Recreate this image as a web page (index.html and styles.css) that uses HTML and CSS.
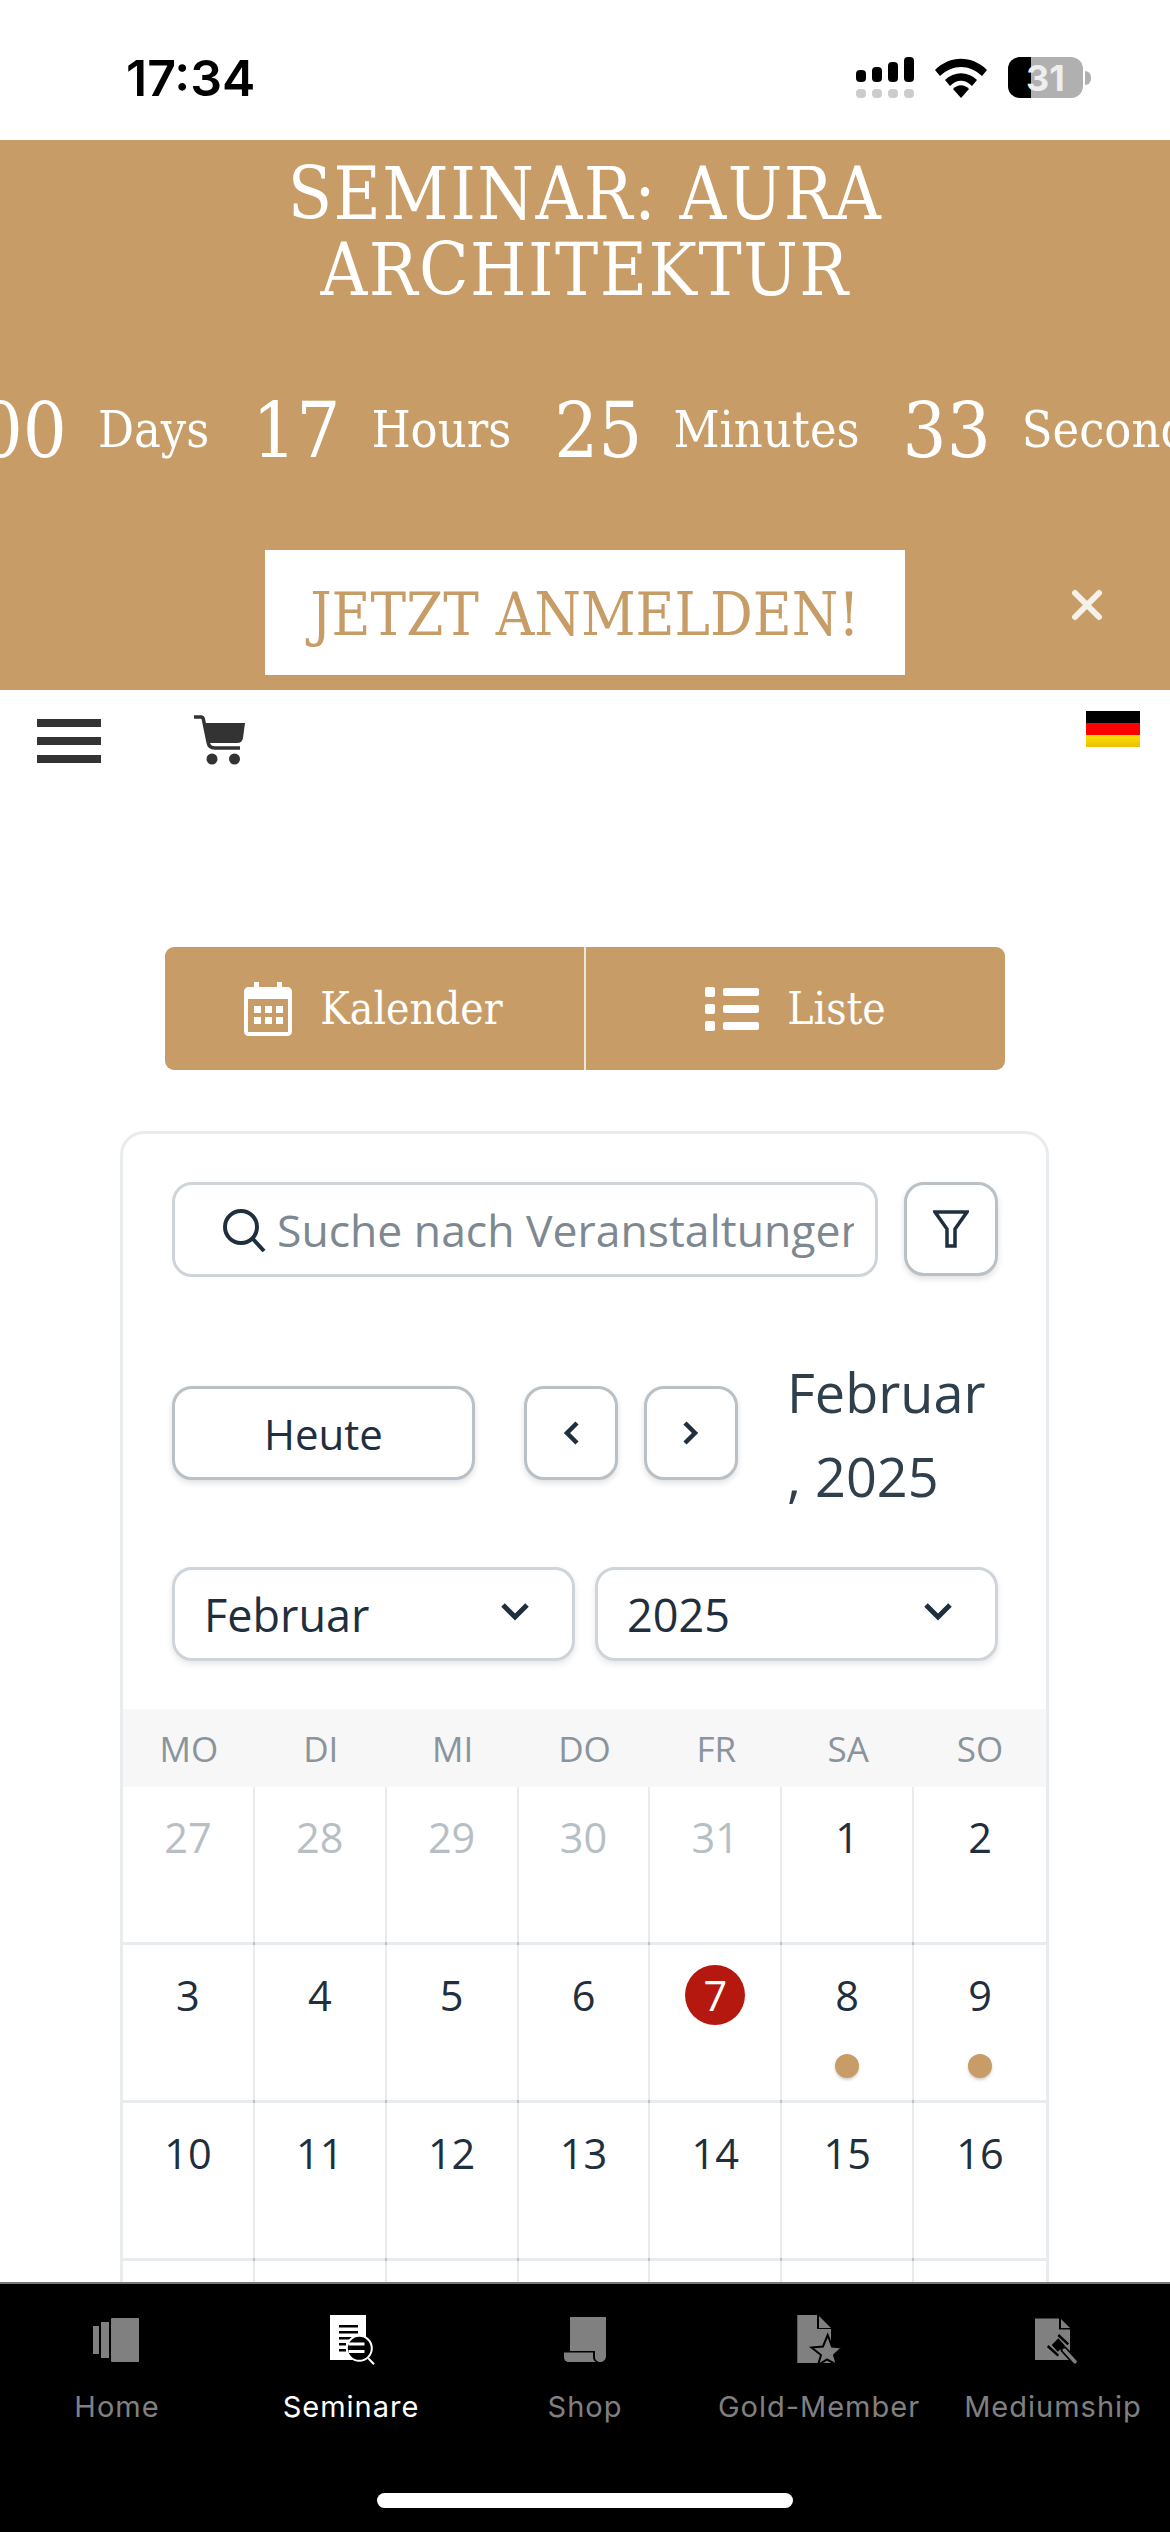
FILE: index.html
```html
<!DOCTYPE html>
<html lang="de">
<head>
    <meta charset="UTF-8">
    <meta name="viewport" content="width=device-width, initial-scale=1.0">
    <title>Seminare</title>
    <link rel="stylesheet" href="styles.css">
</head>
<body>
    <div class="phone">
        <!-- iOS status bar -->
        <div class="status-bar">
            <span class="clock">17:34</span>
            <div class="status-icons">
                <svg class="signal" width="58" height="41" viewBox="0 0 58 41">
                    <rect x="0" y="13" width="10" height="12" rx="4"/>
                    <rect x="16" y="10" width="10" height="15" rx="4"/>
                    <rect x="32" y="5" width="10" height="20" rx="4"/>
                    <rect x="48" y="0" width="10" height="25" rx="4"/>
                    <g fill="#ccc">
                        <rect x="0" y="32" width="10" height="9" rx="4"/>
                        <rect x="16" y="32" width="10" height="9" rx="4"/>
                        <rect x="32" y="32" width="10" height="9" rx="4"/>
                        <rect x="48" y="32" width="10" height="9" rx="4"/>
                    </g>
                </svg>
                <svg class="wifi" width="52" height="40" viewBox="0 0 52 40">
                    <path d="M0 12 C15 -3 37 -3 52 12 L47 18 C34 6 18 6 5 18 Z"/>
                    <path d="M10 22 C19 13 33 13 42 22 L37 28 C30 21 22 21 15 28 Z"/>
                    <path d="M18 31 C23 26 29 26 34 31 L26 40 Z"/>
                </svg>
                <div class="battery">
                    <div class="battery-body"><div class="battery-fill"></div><span class="battery-level">31</span></div>
                    <div class="battery-tip"></div>
                </div>
            </div>
        </div>

        <main class="content">
            <!-- seminar countdown banner -->
            <section class="banner">
                <h1 class="banner-title">SEMINAR: AURA<br>ARCHITEKTUR</h1>
                <div class="countdown">
                    <span class="count-num">00</span><span class="count-label">Days</span>
                    <span class="count-num">17</span><span class="count-label">Hours</span>
                    <span class="count-num">25</span><span class="count-label">Minutes</span>
                    <span class="count-num">33</span><span class="count-label">Seconds</span>
                </div>
                <a class="banner-button">JETZT ANMELDEN!</a>
                <svg class="banner-close" width="32" height="32" viewBox="0 0 32 32"><path d="M4 4 L28 28 M28 4 L4 28"/></svg>
            </section>

            <div class="toolbar">
                <div class="hamburger"><span></span><span></span><span></span></div>
                <svg class="cart" width="52" height="50" viewBox="0 0 52 50">
                    <path class="cart-line" d="M1 2 H8 C9.500 2 10 3 10.300 4 L15 27 C15.600 31 18 33 22 33 H47"/>
                    <path d="M11 8 H52 L50 23 C49.500 26 47.500 28 44 28 H15.500 Z"/>
                    <circle cx="19" cy="44" r="5.500"/>
                    <circle cx="41.500" cy="44" r="5.500"/>
                </svg>
                <div class="flag"><span class="flag-black"></span><span class="flag-red"></span><span class="flag-gold"></span></div>
            </div>

            <div class="view-toggle">
                <a class="toggle-item">
                    <svg class="toggle-cal" width="48" height="54" viewBox="0 0 48 54">
                        <path fill-rule="evenodd" d="M10 0 H15 V5 H33 V0 H38 V5 H43 C46 5 48 7 48 10 V49 C48 52 46 54 43 54 H5 C2 54 0 52 0 49 V10 C0 7 2 5 5 5 H10 Z M4 17 V49 C4 50 4 50 5 50 H43 C44 50 44 50 44 49 V17 Z"/>
                        <rect x="10" y="24" width="7" height="7"/><rect x="21" y="24" width="7" height="7"/><rect x="32" y="24" width="7" height="7"/>
                        <rect x="10" y="35" width="7" height="7"/><rect x="21" y="35" width="7" height="7"/><rect x="32" y="35" width="7" height="7"/>
                    </svg>
                    <span>Kalender</span>
                </a>
                <a class="toggle-item">
                    <svg width="54" height="44" viewBox="0 0 54 44">
                        <rect x="0" y="0" width="10" height="10" rx="2"/><rect x="18" y="1" width="36" height="8" rx="2"/>
                        <rect x="0" y="17" width="10" height="10" rx="2"/><rect x="18" y="18" width="36" height="8" rx="2"/>
                        <rect x="0" y="34" width="10" height="10" rx="2"/><rect x="18" y="35" width="36" height="8" rx="2"/>
                    </svg>
                    <span>Liste</span>
                </a>
            </div>

            <!-- calendar card -->
            <section class="card">
                <div class="card-controls">
                    <div class="search-row">
                        <div class="search-box">
                            <svg class="search-icon" width="44" height="44" viewBox="0 0 44 44"><circle cx="19" cy="19" r="16"/><path d="M31 31 L42 43"/></svg>
                            <div class="search-text">Suche nach Veranstaltungen</div>
                        </div>
                        <button class="icon-btn filter-btn">
                            <svg width="36" height="38" viewBox="0 0 36 38"><path d="M2 2 H34 L22 19 V36 H14 V19 Z"/></svg>
                        </button>
                    </div>

                    <div class="nav-row">
                        <button class="today-btn">Heute</button>
                        <button class="icon-btn nav-btn">
                            <svg width="18" height="26" viewBox="0 0 18 26"><path d="M15 3 L5 13 L15 23"/></svg>
                        </button>
                        <button class="icon-btn nav-btn">
                            <svg width="18" height="26" viewBox="0 0 18 26"><path d="M3 3 L13 13 L3 23"/></svg>
                        </button>
                        <div class="month-title">Februar<br>, 2025</div>
                    </div>

                    <div class="select-row">
                        <div class="select-box"><span>Februar</span><svg width="30" height="20" viewBox="0 0 30 20"><path d="M3 3 L15 15 L27 3"/></svg></div>
                        <div class="select-box"><span>2025</span><svg width="30" height="20" viewBox="0 0 30 20"><path d="M3 3 L15 15 L27 3"/></svg></div>
                    </div>
                </div>

                <div class="weekdays">
                    <div>MO</div><div>DI</div><div>MI</div><div>DO</div><div>FR</div><div>SA</div><div>SO</div>
                </div>

                <div class="days">
                    <div class="day muted"><span>27</span></div>
                    <div class="day muted"><span>28</span></div>
                    <div class="day muted"><span>29</span></div>
                    <div class="day muted"><span>30</span></div>
                    <div class="day muted"><span>31</span></div>
                    <div class="day"><span>1</span></div>
                    <div class="day"><span>2</span></div>
                    <div class="day"><span>3</span></div>
                    <div class="day"><span>4</span></div>
                    <div class="day"><span>5</span></div>
                    <div class="day"><span>6</span></div>
                    <div class="day today"><span>7</span></div>
                    <div class="day"><span>8</span><i class="dot"></i></div>
                    <div class="day"><span>9</span><i class="dot"></i></div>
                    <div class="day"><span>10</span></div>
                    <div class="day"><span>11</span></div>
                    <div class="day"><span>12</span></div>
                    <div class="day"><span>13</span></div>
                    <div class="day"><span>14</span></div>
                    <div class="day"><span>15</span></div>
                    <div class="day"><span>16</span></div>
                </div>
                <div class="days days-next">
                    <div class="day"></div>
                    <div class="day"></div>
                    <div class="day"></div>
                    <div class="day"></div>
                    <div class="day"></div>
                    <div class="day"></div>
                    <div class="day"></div>
                </div>
            </section>
        </main>

        <!-- bottom tabs -->
        <nav class="tabbar">
            <div class="tabs">
                <a class="tab">
                    <svg viewBox="0 0 46 50">
                        <rect x="-1" y="11" width="6" height="28"/><rect x="7" y="7" width="8" height="36"/><rect x="17" y="3" width="28" height="44" rx="1"/>
                    </svg>
                    <span>Home</span>
                </a>
                <a class="tab active">
                    <svg viewBox="0 0 46 50">
                        <rect x="2" y="0" width="36" height="45"/>
                        <g class="ink">
                            <rect x="11" y="10" width="19" height="2.500"/>
                            <rect x="11" y="16" width="19" height="2.500"/>
                            <rect x="11" y="22" width="14" height="2.500"/>
                            <rect x="11" y="28" width="7" height="2.500"/>
                            <rect x="11" y="34" width="7" height="2.500"/>
                        </g>
                        <circle class="lens" cx="31.300" cy="33.300" r="12.500"/>
                        <rect x="20.500" y="27.500" width="16" height="3"/>
                        <rect x="20.500" y="35" width="16" height="3"/>
                        <path class="handle" d="M40.300 43.300 L46 49.300"/>
                    </svg>
                    <span>Seminare</span>
                </a>
                <a class="tab">
                    <svg viewBox="0 0 46 50">
                        <path d="M8 2 H44 V41 C44 45 41 47 38 47 C35 47 33 44.500 33 42 V36 H8 Z"/>
                        <path d="M2 37.500 H31 V42 C31 44 32 46 34 47 H7 C4 47 2 45 2 42 Z"/>
                    </svg>
                    <span>Shop</span>
                </a>
                <a class="tab">
                    <svg viewBox="0 0 46 50">
                        <path d="M1.300 0 H21 V14 H35 V48 H1.300 Z"/>
                        <path d="M23 1 L35 13 H23 Z"/>
                        <path class="star" d="M31.700 20 L36 31.500 L46.300 32.500 L38 40 L41 50 L31 44.500 L22 50 L25 40 L15.500 32.500 L27 31.500 Z"/>
                    </svg>
                    <span>Gold-Member</span>
                </a>
                <a class="tab">
                    <svg viewBox="0 0 46 50">
                        <path d="M5 3.500 H29 V14.500 H40 V45 H5 Z"/>
                        <path d="M31 4 L40 13 H31 Z"/>
                        <path class="gavel-bar" d="M28.300 20 L38.300 29.300 M17.700 31 L28.300 40.700"/>
                        <path class="gavel-head" d="M28.300 23.300 L35 30.700 L27.700 36.700 L21.700 30 Z"/>
                        <path class="gavel-handle-out" d="M34.300 35 L45 46.700"/>
                        <path class="gavel-handle" d="M34.300 35 L45 46.700"/>
                    </svg>
                    <span>Mediumship</span>
                </a>
            </div>
            <div class="home-indicator"></div>
        </nav>
    </div>
</body>
</html>
```

FILE: styles.css
```css
/* Base styles */
* {
    margin: 0;
    padding: 0;
    box-sizing: border-box;
}

body {
    font-family: 'Open Sans', sans-serif;
    background-color: #fff;
}

.phone {
    width: 1170px;
    height: 2532px;
    display: flex;
    flex-direction: column;
    overflow: hidden;
}

/* Status bar */
.status-bar {
    height: 140px;
    flex: none;
    display: flex;
    align-items: flex-start;
    justify-content: space-between;
    padding: 50px 79px 0 126px;
}

.clock {
    font-family: 'Inter', sans-serif;
    font-size: 50px;
    font-weight: 600;
    line-height: 56px;
    color: #000;
}

.status-icons {
    display: flex;
    align-items: flex-start;
    padding-top: 7px;
}

.wifi {
    margin: 1px 21px 0 21px;
}

.battery {
    display: flex;
    align-items: center;
}

.battery-body {
    width: 75px;
    height: 41px;
    border-radius: 12px;
    background: #b0b0b0;
    position: relative;
    overflow: hidden;
    display: flex;
    align-items: center;
    justify-content: center;
}

.battery-fill {
    position: absolute;
    left: 0;
    top: 0;
    bottom: 0;
    width: 23px;
    background: #000;
}

.battery-level {
    position: relative;
    font-family: 'Inter', sans-serif;
    font-size: 36px;
    font-weight: 700;
    color: #eee;
}

.battery-tip {
    width: 6px;
    height: 14px;
    margin-left: 2px;
    border-radius: 0 7px 7px 0;
    background: #b0b0b0;
}

/* Everything between status bar and tabs */
.content {
    flex: 1;
    min-height: 0;
    overflow: hidden;
}

/* Banner */
.banner {
    position: relative;
    height: 550px;
    background-color: #c79c66;
    color: #fff;
    text-align: center;
    padding-top: 16px;
    font-family: 'DejaVu Serif Condensed', 'DejaVu Serif', serif;
}

.banner-title {
    font-size: 72px;
    font-weight: 400;
    letter-spacing: 1.500px;
    line-height: 76px;
}

.countdown {
    height: 108px;
    margin-top: 68px;
    padding-left: 64px;
    display: flex;
    align-items: center;
    justify-content: center;
    white-space: nowrap;
}

.count-num {
    font-size: 77px;
    margin-right: 31px;
}

.count-label {
    font-size: 50px;
    margin-right: 43px;
}

.banner-button {
    display: block;
    width: 640px;
    height: 125px;
    margin: 66px 0 0 265px;
    background: #fff;
    color: #c79c66;
    font-size: 59.300px;
    line-height: 130px;
    overflow: hidden;
}

.banner-close {
    position: absolute;
    right: 67px;
    top: 449px;
    fill: none;
    stroke: #f5f0e8;
    stroke-width: 6px;
    stroke-linecap: round;
}

/* Toolbar below banner */
.toolbar {
    height: 257px;
    display: flex;
    align-items: flex-start;
    padding: 25px 30px 0 37px;
}

.hamburger {
    width: 64px;
    margin-top: 4px;
    display: flex;
    flex-direction: column;
    gap: 10px;
}

.hamburger span {
    height: 8px;
    background: #333;
}

.cart {
    margin-left: 92px;
    fill: #333;
}

.cart-line {
    fill: none;
    stroke: #333;
    stroke-width: 3.500px;
}

.flag {
    width: 54px;
    margin: -4px 0 0 auto;
    display: flex;
    flex-direction: column;
}

.flag span {
    height: 12px;
}

.flag-black { background: #000; }
.flag-red { background: #f00; }
.flag-gold { background: linear-gradient(#ffe000, #e8c000); }

/* Kalender / Liste switch */
.view-toggle {
    width: 840px;
    height: 123px;
    margin: 0 auto;
    display: flex;
    border-radius: 9px;
    overflow: hidden;
    background: #c79c66;
}

.toggle-item {
    flex: 1;
    display: flex;
    align-items: center;
    justify-content: center;
    gap: 28px;
    color: #fff;
    font-family: 'DejaVu Serif Condensed', 'DejaVu Serif', serif;
    font-size: 44px;
    fill: #fff;
}

.toggle-item + .toggle-item {
    border-left: 2px solid #efe6da;
}

.toggle-cal {
    margin-left: -2px;
}

/* Calendar card */
.card {
    width: 929px;
    margin: 61px 0 0 120px;
    border: 3px solid #e9ecef;
    border-radius: 24px;
    background: #fff;
}

.card-controls {
    padding: 48px 48px 48px 49px;
}

.search-row,
.nav-row,
.select-row {
    display: flex;
}

.search-box {
    width: 706px;
    height: 95px;
    display: flex;
    align-items: center;
    padding-left: 47px;
    border: 3px solid #ced4da;
    border-radius: 20px;
}

.search-icon {
    flex: none;
    fill: none;
    stroke: #1f2f3d;
    stroke-width: 4px;
}

.search-text {
    width: 577px;
    margin-left: 11px;
    overflow: hidden;
    white-space: nowrap;
    font-size: 44.500px;
    color: #7d8890;
}

.icon-btn {
    height: 94px;
    width: 94px;
    display: flex;
    align-items: center;
    justify-content: center;
    background: #fff;
    border: 3px solid #b9c0c6;
    border-radius: 20px;
    box-shadow: 0 3px 6px rgba(0, 0, 0, 0.12);
    fill: none;
    stroke: #1f2f3d;
}

.filter-btn {
    margin-left: 26px;
}

.filter-btn svg {
    stroke-width: 3.500px;
}

.nav-row {
    margin-top: 84px;
    height: 179px;
    align-items: flex-start;
}

.today-btn {
    width: 303px;
    height: 94px;
    margin-top: 25px;
    background: #fff;
    border: 3px solid #b9c0c6;
    border-radius: 20px;
    box-shadow: 0 3px 6px rgba(0, 0, 0, 0.12);
    font-family: 'Open Sans', sans-serif;
    font-size: 42px;
    color: #1f2f3d;
}

.nav-btn {
    margin: 25px 0 0 49px;
    stroke-width: 4.500px;
}

.nav-btn + .nav-btn {
    margin-left: 26px;
}

.month-title {
    margin: -11px 0 0 49px;
    font-size: 54px;
    line-height: 84px;
    color: #2f3f4c;
}

.select-row {
    margin-top: 27px;
    gap: 20px;
}

.select-box {
    flex: 1;
    height: 94px;
    display: flex;
    align-items: center;
    justify-content: space-between;
    padding: 0 42px 0 29px;
    border: 3px solid #ced4da;
    border-radius: 20px;
    box-shadow: 0 3px 6px rgba(0, 0, 0, 0.1);
    font-size: 45px;
    color: #1f2f3d;
}

.select-box svg {
    fill: none;
    stroke: #1f2f3d;
    stroke-width: 5px;
    margin-top: -4px;
}

/* Month grid */
.weekdays,
.days {
    display: grid;
    grid-template-columns: repeat(7, 1fr);
    text-align: center;
}

.weekdays {
    height: 78px;
    align-items: center;
    background: #f7f7f7;
    font-size: 35px;
    color: #8a949c;
}

.day {
    position: relative;
    height: 158px;
    padding-top: 22px;
    display: flex;
    flex-direction: column;
    align-items: center;
    border-right: 2px solid #e9ecef;
    border-bottom: 3px solid #e9ecef;
    font-size: 41.500px;
    line-height: 56px;
    color: #1f2f3d;
}

/* darker speck where the grid lines cross */
.day::after {
    content: "";
    position: absolute;
    right: -2px;
    bottom: -3px;
    width: 2px;
    height: 3px;
    background: #bcc2c8;
}

.day:nth-child(7n) {
    border-right: 0;
}

.day:nth-child(7n)::after {
    display: none;
}

.day.muted {
    color: #b8bfc4;
}

.day.today span {
    width: 60px;
    height: 60px;
    margin-top: -2px;
    border-radius: 50%;
    background: #b5180e;
    color: #fff;
    text-align: center;
    line-height: 60px;
}

.dot {
    width: 24px;
    height: 24px;
    margin-top: 31px;
    border-radius: 50%;
    background: #c79c66;
    box-shadow: 0 2px 3px rgba(0, 0, 0, 0.18);
}

/* Tab bar */
.tabbar {
    height: 250px;
    flex: none;
    background: #000;
    border-top: 2px solid #777;
}

.tabs {
    display: grid;
    grid-template-columns: repeat(5, 1fr);
    padding-top: 31px;
}

.tab {
    display: flex;
    flex-direction: column;
    align-items: center;
    font-family: 'Inter', sans-serif;
    font-size: 29px;
    font-weight: 400;
    letter-spacing: 1px;
    color: #808080;
    fill: #808080;
}

.tab svg {
    width: 46px;
    height: 50px;
    overflow: visible;
}

.tab span {
    margin-top: 22px;
    line-height: 40px;
}

.tab.active {
    color: #fff;
    fill: #fff;
}

.ink {
    fill: #000;
}

.lens {
    fill: #000;
    stroke: #fff;
    stroke-width: 2px;
}

.handle {
    fill: none;
    stroke: #fff;
    stroke-width: 2px;
}

.star {
    stroke: #000;
    stroke-width: 2px;
}

.gavel-bar {
    fill: none;
    stroke: #000;
    stroke-width: 2.500px;
}

.gavel-head {
    fill: #000;
}

.gavel-handle-out {
    fill: none;
    stroke: #000;
    stroke-width: 7px;
    stroke-linecap: round;
}

.gavel-handle {
    fill: none;
    stroke: #808080;
    stroke-width: 3.500px;
    stroke-linecap: round;
}

.home-indicator {
    width: 416px;
    height: 15px;
    margin: 66px auto 0;
    border-radius: 8px;
    background: #fff;
}
```
